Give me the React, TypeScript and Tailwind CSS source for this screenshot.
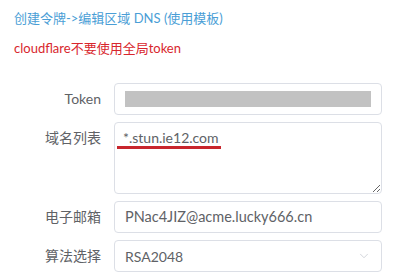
import { ChevronDown } from "lucide-react";

const FONT = { fontFamily: 'Lato, "Noto Sans CJK SC", sans-serif' };

function Label({ text }: { text: string }) {
  return (
    <div className="w-[101px] shrink-0 text-right text-[14px] text-[#606266] leading-[32px]">
      {text}
    </div>
  );
}

export default function App() {
  return (
    <div className="w-[394px] h-[280px] bg-white overflow-hidden" style={FONT}>
      <div className="pl-[14px] pt-[8px] text-[13px] leading-[20px] text-[#4a9ed6]">
        创建令牌-&gt;编辑区域 DNS (使用模板)
      </div>
      <div className="pl-[14px] pt-[10px] text-[13px] leading-[20px] text-[#d8262d]">
        cloudflare不要使用全局token
      </div>

      <div className="mt-[25px] flex flex-col gap-[7px] pr-[12px]">
        {/* Token */}
        <div className="flex gap-[13px]">
          <Label text="Token" />
          <div className="flex-1 h-[32px] rounded-[4px] border border-[#dcdfe6] flex items-center px-[10px]">
            <div className="h-[16px] flex-1 bg-[#c2c2c2]" />
          </div>
        </div>

        {/* 域名列表 */}
        <div className="flex gap-[13px]">
          <div className="w-[101px] shrink-0 text-right text-[14px] text-[#606266] leading-[20px] pt-[6px]">
            域名列表
          </div>
          <div className="relative flex-1">
            <textarea
              readOnly
              defaultValue="*.stun.ie12.com"
              className="block w-full h-[72px] rounded-[4px] border border-[#dcdfe6] px-[8px] py-[5px] text-[14px] leading-[20px] text-[#606266] outline-none"
              style={FONT}
            />
            <div className="absolute left-[3px] top-[24px] w-[104px] h-[3px] bg-[#c8262d]" />
          </div>
        </div>

        {/* 电子邮箱 */}
        <div className="flex gap-[13px]">
          <Label text="电子邮箱" />
          <div className="flex-1 h-[32px] rounded-[4px] border border-[#dcdfe6] flex items-center px-[10px] text-[14.5px] text-[#606266]">
            PNac4JIZ@acme.lucky666.cn
          </div>
        </div>

        {/* 算法选择 */}
        <div className="flex gap-[13px]">
          <Label text="算法选择" />
          <div className="flex-1 h-[32px] rounded-[4px] border border-[#dcdfe6] flex items-center justify-between pl-[10px] pr-[10px] text-[14px] text-[#606266]">
            <span>RSA2048</span>
            <ChevronDown size={14} strokeWidth={1.2} className="text-[#c0c4cc]" />
          </div>
        </div>
      </div>
    </div>
  );
}
